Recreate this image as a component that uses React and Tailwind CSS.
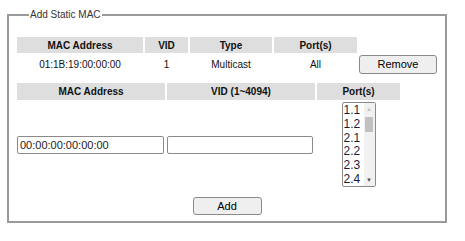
import React, { Component } from 'react';

const ports = ['1.1', '1.2', '2.1', '2.2', '2.3', '2.4'];

export default class App extends Component {
	state = {
		mac: '00:00:00:00:00:00',
		vid: ''
	};

	changeInput = (e) => {
		this.setState({ [e.target.name]: e.target.value });
	};

	render() {
		return (
			<div className="w-[465px] h-[241px] bg-white font-['Liberation_Sans',Arial,sans-serif] text-[10px] text-[#111] overflow-hidden">
				<fieldset className="ml-[7px] mt-[9px] w-[440px] border-2 border-[#9a9a9a] px-[8px] pb-[6px]">
					<legend className="ml-[12px] px-[1px] text-[10px] leading-[12px] text-[#333]">Add Static MAC</legend>

					{/* existing entries */}
					<div className="mt-[16px] grid grid-cols-[126px_43px_82px_83px_78px] gap-[2px]">
						<div className="h-[16px] bg-[#dedede] font-bold flex items-center justify-center">MAC Address</div>
						<div className="h-[16px] bg-[#dedede] font-bold flex items-center justify-center">VID</div>
						<div className="h-[16px] bg-[#dedede] font-bold flex items-center justify-center">Type</div>
						<div className="h-[16px] bg-[#dedede] font-bold flex items-center justify-center">Port(s)</div>
						<div></div>

						<div className="h-[19px] flex items-center justify-center">01:1B:19:00:00:00</div>
						<div className="h-[19px] flex items-center justify-center">1</div>
						<div className="h-[19px] flex items-center justify-center">Multicast</div>
						<div className="h-[19px] flex items-center justify-center">All</div>
						<button className="h-[19px] w-[78px] bg-[#efefef] border border-[#8a8a8a] rounded-[3px] text-[11px] text-black">
							Remove
						</button>
					</div>

					{/* new entry */}
					<div className="mt-[9px] grid grid-cols-[148px_148px_83px] gap-[2px]">
						<div className="h-[17px] bg-[#dedede] font-bold flex items-center justify-center">MAC Address</div>
						<div className="h-[17px] bg-[#dedede] font-bold flex items-center justify-center">VID (1~4094)</div>
						<div className="h-[17px] bg-[#dedede] font-bold flex items-center justify-center">Port(s)</div>

						<div className="h-[85px] flex items-center">
							<input
								name="mac"
								value={this.state.mac}
								onChange={this.changeInput}
								className="w-[147px] h-[18px] border border-[#8a8a8a] rounded-[2px] px-[2px] text-[11px] text-[#222] outline-none"
							/>
						</div>
						<div className="h-[85px] flex items-center">
							<input
								name="vid"
								value={this.state.vid}
								onChange={this.changeInput}
								className="w-[146px] h-[18px] border border-[#8a8a8a] rounded-[2px] px-[2px] text-[11px] text-[#222] outline-none"
							/>
						</div>
						<div className="h-[85px] flex items-center justify-center">
							<div className="w-[34px] h-[85px] border border-[#8a8a8a] rounded-[2px] flex bg-white">
								<div className="flex-1 pl-[1px]">
									{ports.map((p) => (
										<div key={p} className="h-[13.8px] leading-[14px] text-[12px] text-[#1c1c3c]">
											{p}
										</div>
									))}
								</div>
								<div className="w-[11px] bg-[#f1f1f1] flex flex-col items-center">
									<div className="h-[12px] flex items-center text-[6px] text-[#c4c4c4]">▲</div>
									<div className="mt-[2px] w-[8px] h-[15px] bg-[#c1c1c1]"></div>
									<div className="flex-1"></div>
									<div className="h-[12px] flex items-center text-[6px] text-[#555]">▼</div>
								</div>
							</div>
						</div>
					</div>

					<div className="mt-[10px] flex justify-center">
						<button className="w-[69px] h-[18px] bg-[#efefef] border border-[#8a8a8a] rounded-[3px] text-[11px] text-black">
							Add
						</button>
					</div>
				</fieldset>
			</div>
		);
	}
}
